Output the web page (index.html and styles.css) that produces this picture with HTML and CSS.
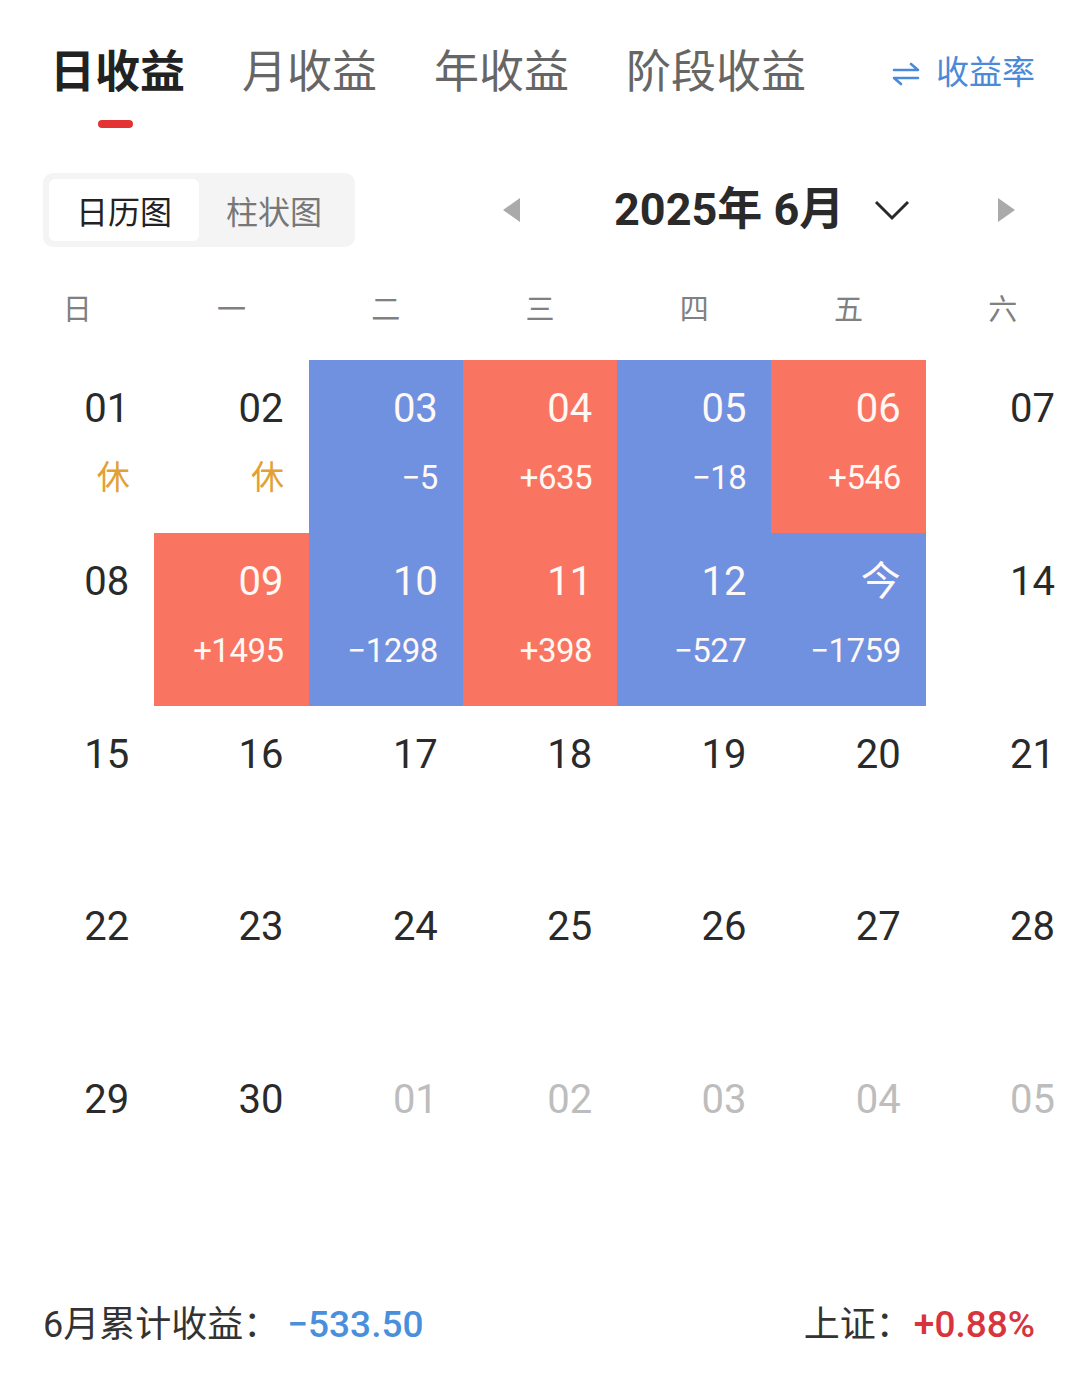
FILE: index.html
```html
<!DOCTYPE html>
<html lang="zh-CN">
<head>
<meta charset="utf-8">
<title>日收益</title>
<link rel="stylesheet" href="styles.css">
</head>
<body>
<div class="tabs">
  <div class="tab active"><span>日收益</span><span class="tab-bar"></span></div>
  <div class="tab">月收益</div>
  <div class="tab">年收益</div>
  <div class="tab">阶段收益</div>
  <div class="rate">
    <svg class="swap" width="28" height="24" viewBox="0 0 28 24"><path d="M2 8 H26 L19 2" fill="none" stroke="#4a8ad8" stroke-width="2.6" stroke-linecap="round" stroke-linejoin="round"/><path d="M26 16 H2 L9 22" fill="none" stroke="#4a8ad8" stroke-width="2.6" stroke-linecap="round" stroke-linejoin="round"/></svg>
    <span>收益率</span>
  </div>
</div>

<div class="toolbar">
  <div class="seg">
    <div class="seg-item on">日历图</div>
    <div class="seg-item">柱状图</div>
  </div>
  <div class="nav">
    <span class="tri-left"></span>
    <span class="title">2025年 6月</span>
    <svg class="chev" width="36" height="22" viewBox="0 0 36 22"><polyline points="2,3 18,19 34,3" fill="none" stroke="#2a2a2a" stroke-width="3"/></svg>
    <span class="tri-right"></span>
  </div>
</div>

<div class="weekdays">
  <span>日</span><span>一</span><span>二</span><span>三</span><span>四</span><span>五</span><span>六</span>
</div>

<div class="cal">
  <div class="cell"><span class="d">01</span><span class="v rest">休</span></div>
  <div class="cell"><span class="d">02</span><span class="v rest">休</span></div>
  <div class="cell down"><span class="d">03</span><span class="v">−5</span></div>
  <div class="cell up"><span class="d">04</span><span class="v">+635</span></div>
  <div class="cell down"><span class="d">05</span><span class="v">−18</span></div>
  <div class="cell up"><span class="d">06</span><span class="v">+546</span></div>
  <div class="cell"><span class="d">07</span></div>

  <div class="cell"><span class="d">08</span></div>
  <div class="cell up"><span class="d">09</span><span class="v">+1495</span></div>
  <div class="cell down"><span class="d">10</span><span class="v">−1298</span></div>
  <div class="cell up"><span class="d">11</span><span class="v">+398</span></div>
  <div class="cell down"><span class="d">12</span><span class="v">−527</span></div>
  <div class="cell down"><span class="d today">今</span><span class="v">−1759</span></div>
  <div class="cell"><span class="d">14</span></div>

  <div class="cell"><span class="d">15</span></div>
  <div class="cell"><span class="d">16</span></div>
  <div class="cell"><span class="d">17</span></div>
  <div class="cell"><span class="d">18</span></div>
  <div class="cell"><span class="d">19</span></div>
  <div class="cell"><span class="d">20</span></div>
  <div class="cell"><span class="d">21</span></div>

  <div class="cell"><span class="d">22</span></div>
  <div class="cell"><span class="d">23</span></div>
  <div class="cell"><span class="d">24</span></div>
  <div class="cell"><span class="d">25</span></div>
  <div class="cell"><span class="d">26</span></div>
  <div class="cell"><span class="d">27</span></div>
  <div class="cell"><span class="d">28</span></div>

  <div class="cell"><span class="d">29</span></div>
  <div class="cell"><span class="d">30</span></div>
  <div class="cell next"><span class="d">01</span></div>
  <div class="cell next"><span class="d">02</span></div>
  <div class="cell next"><span class="d">03</span></div>
  <div class="cell next"><span class="d">04</span></div>
  <div class="cell next"><span class="d">05</span></div>
</div>

<div class="foot">
  <div class="foot-left"><span class="lbl">6月累计收益：</span><span class="neg">−533.50</span></div>
  <div class="foot-right"><span class="lbl">上证：</span><span class="pos">+0.88%</span></div>
</div>
</body>
</html>
```

FILE: styles.css
```css
html, body {
  margin: 0;
  padding: 0;
  background: #fff;
}
body {
  width: 1080px;
  font-family: Roboto, "Noto Sans CJK SC", sans-serif;
  color: #333;
}

/* top tabs */
.tabs {
  display: flex;
  align-items: flex-start;
  padding: 40px 45px 0 50px;
}
.tab {
  display: flex;
  flex-direction: column;
  align-items: center;
  font-size: 45px;
  line-height: 66px;
  color: #666;
  margin-right: 57px;
}
.tab.active {
  color: #222;
  font-weight: 700;
}
.tab-bar {
  display: block;
  width: 35px;
  height: 8px;
  border-radius: 4px;
  background: #e23434;
  margin-top: 14px;
  margin-right: 5px;
}
.rate {
  margin-left: auto;
  display: flex;
  align-items: center;
  gap: 16px;
  font-size: 33px;
  line-height: 66px;
  color: #4a8ad8;
}
.swap {
  margin-top: 2px;
}

/* toolbar */
.toolbar {
  display: flex;
  align-items: center;
  margin-top: 45px;
  padding: 0 65px 0 43px;
}
.seg {
  display: flex;
  background: #f4f4f4;
  border-radius: 10px;
  padding: 6px;
}
.seg-item {
  width: 150px;
  height: 62px;
  display: flex;
  align-items: center;
  justify-content: center;
  font-size: 32px;
  color: #777;
  border-radius: 6px;
}
.seg-item.on {
  background: #fff;
  color: #222;
}
.nav {
  flex: 1;
  display: flex;
  align-items: center;
  margin-left: 148px;
}
.tri-left {
  width: 0;
  height: 0;
  border-top: 12px solid transparent;
  border-bottom: 12px solid transparent;
  border-right: 17px solid #aaa;
}
.tri-right {
  margin-left: auto;
  width: 0;
  height: 0;
  border-top: 12px solid transparent;
  border-bottom: 12px solid transparent;
  border-left: 17px solid #aaa;
}
.title {
  margin-left: 94px;
  font-size: 45px;
  font-weight: 700;
  color: #2a2a2a;
  line-height: 60px;
}
.chev {
  margin-left: 30px;
}

/* weekdays */
.weekdays {
  display: grid;
  grid-template-columns: repeat(7, 1fr);
  align-items: center;
  height: 60px;
  margin-top: 30px;
  margin-bottom: 23px;
  text-align: center;
  font-size: 29px;
  color: #808080;
}

/* calendar */
.cal {
  display: grid;
  grid-template-columns: repeat(7, 1fr);
  grid-auto-rows: 172.8px;
}
.cell {
  display: flex;
  flex-direction: column;
  align-items: flex-end;
  padding: 25px 25px 0 0;
}
.d {
  font-size: 40px;
  line-height: 48px;
  color: #2a2a2a;
}
.v {
  font-size: 33px;
  line-height: 44px;
  margin-top: 23px;
  letter-spacing: -0.5px;
}
.up {
  background: #fa7561;
}
.down {
  background: #6f91e0;
}
.up .d, .up .v, .down .d, .down .v {
  color: #fff8f5;
}
.rest {
  color: #e3a035;
}
.next .d {
  color: #bdbdbd;
}

/* footer */
.foot {
  display: flex;
  justify-content: space-between;
  align-items: center;
  margin-top: 76px;
  padding: 0 45px 0 43px;
  line-height: 50px;
}
.lbl {
  font-size: 36px;
  color: #333;
}
.neg {
  font-size: 37px;
  font-weight: 500;
  color: #4a8fdc;
  margin-left: 8px;
}
.pos {
  font-size: 37px;
  font-weight: 500;
  color: #d8343c;
  margin-left: 2px;
}
```
